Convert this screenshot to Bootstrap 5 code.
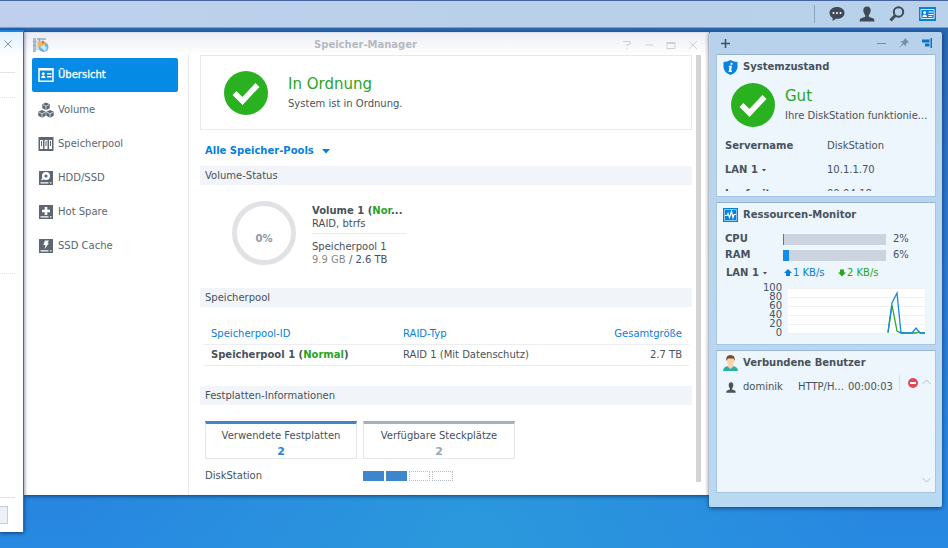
<!DOCTYPE html>
<html lang="de">
<head>
<meta charset="utf-8">
<meta name="viewport" content="width=device-width, initial-scale=1">
<title>Speicher-Manager</title>
<link href="https://cdn.jsdelivr.net/npm/bootstrap@5.3.0/dist/css/bootstrap.min.css" rel="stylesheet">
<style>
  body{font-family:Verdana,"DejaVu Sans",sans-serif;font-size:10px;line-height:18px;color:#48525c;min-height:100vh;
    background:radial-gradient(ellipse at 50% 100%,#2b98dc 0,rgba(43,152,220,0) 60%),linear-gradient(#2a64ac,#2a78cf 45%,#2789e2);}
  button{background:none;border:0;padding:0;color:inherit;line-height:inherit;display:inline-flex;align-items:center}
  svg{display:block;flex:none}
  .taskbar{height:28px;background:linear-gradient(90deg,#bfd0ee,#b8d0ea 60%,#b9d2ea);border-top:1px solid #45659f;border-bottom:1px solid #7ba0cf;padding-right:12px;gap:14px}
  .taskbar .sep{width:1px;height:18px;background:#8ba3bf}
  .desk{padding:4px 6px 16px 0}
  .win{background:#fff;box-shadow:0 1px 4px rgba(0,20,60,.65)}
  .side-win{width:24px;height:calc(100vh - 46px);margin-top:-2px;border-top:2px solid #1685e4;border-right:1px solid #41699b;background:linear-gradient(#dff0fd,#fff 24px);position:relative;z-index:1}
  .side-win hr{margin:0;width:15px;border-top:1px solid #e1e4e8;opacity:1}
  .side-win hr.dots{border-top-style:dotted}
  .stub{width:8px;height:18px;border:1px solid #c5ced8;border-left:0;background:#edf1f7}
  .titlebar{height:23px;background:linear-gradient(#eceef5,#fff);border-top:1px solid #d9dfeb;color:#b5bac2;padding:1px 11px 0 9px}
  .titlebar h1{font-size:10px;font-weight:700;margin:0;line-height:22px}
  .titlebar .ctl{gap:12px;color:#cdd1d6}
  .titlebar .grp{flex:1 1 0}
  .menu{width:165px;padding:3px 10px 0 8px;border-right:1px solid #e6e9ed}
  .menu a{height:34px;margin-bottom:0;padding-left:6px;gap:4px;color:#5b6570;text-decoration:none;border-radius:2px}
  .menu a.active{background:#058ae6;color:#fff;-webkit-text-stroke:0.3px #fff;margin-bottom:1px}
  .content-pane{padding:0 4px 10px 11px;min-width:0}
  .state-box{border:1px solid #e6e9ed;height:75px;padding-left:23px;gap:20px}
  .okay{font-size:15px;line-height:22px;color:#27a51f;margin:0;font-weight:400}
  .pools{color:#057fdb;font-weight:700;margin:12px 0 6px 5px;gap:8px}
  .bar{background:#f1f4f8;font-size:10px;font-weight:400;line-height:19px;margin:0;padding-left:5px}
  .vol{height:103px;padding:16px 0 0 32px;gap:16px}
  .vol-info{width:95px;line-height:13px;padding-top:3px}
  .vol-info .first{border-bottom:1px solid #e6e9ed;padding-bottom:3px;margin-bottom:6px;white-space:nowrap}
  .grn{color:#27a51f}
  .pool-wrap{padding:17px 3px 20px 4px}
  .pool-wrap table{width:100%;line-height:20px}
  .pool-wrap th{color:#057fdb;font-weight:400}
  .pool-wrap th:first-child{width:192px}
  .pool-wrap th,.pool-wrap td{padding:0 7px;border-bottom:1px solid #ebedf0}
  .tiles{padding:16px 5px 0;gap:6px}
  .tile{width:152px;height:38px;border:1px solid #e2e6ea;border-top:3px solid #a7afbd;text-align:center;line-height:16px;padding-top:4px}
  .tile strong{display:block;color:#9aa5b2;font-size:11px}
  .tile.used{border-top-color:#3d86cb}
  .tile.used strong{color:#2b7fcb}
  .slots{padding:8px 5px 0}
  .slots .lbl{width:158px}
  .slots .slot{width:21px;height:10px;margin-right:2px;border:1px dotted #b9bfc6}
  .slots .slot.full{background:#3d86cb;border:0}
  .thumb{width:5px;background:#d3d3d3;margin:0 8px 13px 0}
  .widgets{width:233px;background:linear-gradient(#b9d2eb,#b8d9f2);padding:0 6px 14px 7px;border-radius:2px}
  .whead{height:22px;padding:0 4px 0 5px;color:#3e5063}
  .whead .ctl{gap:13px}
  .wcard{background:#edf5fd;border:1px solid #a9c4e0;border-top-color:#97b6d6;height:143px;margin-bottom:5px;overflow:hidden}
  .wcard:last-child{margin-bottom:0}
  .wcard h2{font-size:10px;line-height:24px;font-weight:700;margin:0;padding-left:6px;gap:5px}
  .health{padding:4px 0 7px 14px;gap:10px}
  .facts{margin:0 0 0 8px;line-height:24px;height:57px;overflow:hidden}
  .facts dt{width:102px}
  .facts dd{margin:0}
  .facts div{height:24px}
  .meter{height:16px;padding-left:8px;gap:7px}
  .meter label{width:51px;font-weight:700}
  .meter .progress{width:103px;height:11px;border-radius:0;background:#cbd3df}
  .meter .progress-bar{background:#158ae8}
  .net{line-height:20px;padding-left:9px}
  .net .pick{width:58px}
  .net .rate{width:54px;gap:1px}
  .blu{color:#057fdb}
  .scale{line-height:9px;width:65px;text-align:right}
  .chart{gap:6px;padding-right:10px}
  .chart svg{margin-top:5px;flex:1 1 0;min-width:0;background:#fff}
  .users{width:173px;margin-left:9px;line-height:24px}
  .users td{padding:0}
  .users .c-icon{width:17px}.users .c-name{width:55px}.users .c-type{width:50px}
  .cut{border-left:1px solid #d7e1ec;height:16px}
  .ulist{height:112px}
</style>
<script src="https://cdn.jsdelivr.net/npm/bootstrap@5.3.0/dist/js/bootstrap.bundle.min.js"></script>
</head>
<body>
<nav class="taskbar d-flex align-items-center justify-content-end" aria-label="Taskleiste">
  <span class="sep"></span>
  <button type="button" aria-label="Nachrichten"><svg width="16" height="16" viewBox="0 0 16 16"><path fill="#3f4a56" d="M8 1C3.700 1 .5 3.500.5 7c0 2.200 1.200 4 3.200 5L3.500 15l3.500-2.200C12 13.200 15.500 10.500 15.500 7c0-3.500-3.200-6-7.500-6z"/><g fill="#fff"><circle cx="4.500" cy="7" r="1"/><circle cx="8" cy="7" r="1"/><circle cx="11.500" cy="7" r="1"/></g></svg></button>
  <button type="button" aria-label="Benutzer"><svg width="16" height="16" viewBox="0 0 16 16"><path fill="#3f4a56" d="M8 .5c-2.300 0-3.700 1.500-3.700 3.800 0 2.100.9 3.800 1.900 4.700v1.800L1 12.800.5 15.500h15L15 12.800l-5.200-2V9c1-.9 1.900-2.600 1.900-4.700C11.700 2 10.300.5 8 .5z"/></svg></button>
  <button type="button" aria-label="Suche"><svg width="16" height="16" viewBox="0 0 16 16" fill="none" stroke="#3f4a56"><circle cx="9.500" cy="6" r="4.700" stroke-width="2"/><path d="M6 9.800 1.500 14.500" stroke-width="3"/></svg></button>
  <button type="button" aria-label="Widgets"><svg width="17" height="14" viewBox="0 0 18 14" preserveAspectRatio="none"><path fill="#057fdb" d="M0 0h18v14H0z"/><path fill="none" stroke="#d8ecfc" d="M2 2.500h14v9H2z"/><circle cx="6" cy="5.500" r="1.500" fill="#fff"/><path fill="#fff" d="M3.500 10q0-2.500 2.500-2.500T8.500 10zM10 4.500h5v1h-5zM10 7h5v1h-5zM10 9h4v1h-4z"/></svg></button>
</nav>

<main class="desk d-flex align-items-start">
  <section class="win side-win d-flex flex-column flex-shrink-0" aria-label="Fenster im Hintergrund">
    <button type="button" class="ps-1 pt-2" aria-label="Schließen"><svg width="8" height="8" viewBox="0 0 8 8"><path d="M.5.5l7 7m0-7l-7 7" stroke="#8793a1" fill="none"/></svg></button>
    <hr class="mt-4 mb-4">
    <hr class="dots">
    <div class="flex-grow-1"></div>
    <hr class="dots">
    <div class="flex-grow-1"></div>
    <div class="pt-5"></div>
    <hr class="mb-2"><div class="stub mb-2"></div>
  </section>

  <section class="win flex-grow-1 d-flex flex-column" aria-label="Speicher-Manager">
    <header class="titlebar d-flex align-items-center">
      <div class="grp"><svg width="16" height="16" viewBox="0 0 16 16"><path fill="#a9bdcb" d="M0 1h3v14H0zM4 1h9v2H4z"/><path fill="#d4dfe8" d="M3 3h8v10H3z"/><path fill="#8fabc1" d="M0 4h3v1H0zM0 8h3v1H0zM6 1h1v4H6z"/><circle cx="10.500" cy="10" r="5" fill="#65b5e6"/><path fill="#f1b758" d="M5 4.500h7v5H5z"/><path fill="#dd685c" d="M9 4h2v2.500H9z"/><path fill="#cbe9fa" d="m7 10 4-2 3 3-2 3z"/></svg></div>
      <h1>Speicher-Manager</h1>
      <div class="grp ctl d-flex justify-content-end">
        <button type="button" aria-label="Hilfe"><svg width="10" height="10" viewBox="0 0 10 10" fill="none" stroke="currentColor"><path d="M1 1.500h7v3H5v2M5 8v1.500"/></svg></button>
        <button type="button" aria-label="Minimieren"><svg width="10" height="10" viewBox="0 0 10 10" stroke="currentColor"><path d="M1 5h8"/></svg></button>
        <button type="button" aria-label="Maximieren"><svg width="10" height="10" viewBox="0 0 10 10" fill="none" stroke="currentColor"><path d="M1 2.500h8v6H1zM1 3.500h8"/></svg></button>
        <button type="button" aria-label="Schließen"><svg width="10" height="10" viewBox="0 0 10 10" fill="none" stroke="currentColor"><path d="m1 1 8 8m0-8L1 9"/></svg></button>
      </div>
    </header>
    <div class="d-flex flex-grow-1">
      <nav class="menu flex-shrink-0" aria-label="Bereiche">
        <a href="#" class="active d-flex align-items-center"><svg width="16" height="16" viewBox="0 0 16 16"><path fill="none" stroke="#fff" stroke-width="1.500" d="M1 1.750h14v12.500H1z"/><path fill="#fff" d="M1 1h14v2.500H1zM3 11q0-2.500 2.250-2.500T7.500 11zM9 6h4.500v1.500H9zM9 9h4.500v1.500H9z"/><circle cx="5.250" cy="6.800" r="1.500" fill="#fff"/></svg>Übersicht</a>
        <a href="#" class="d-flex align-items-center"><svg width="16" height="16" viewBox="0 0 16 16"><g id="cube"><path fill="#5c6773" d="m8 .5 3.700 1.800v4L8 8.200 4.300 6.300v-4z"/><path fill="none" stroke="#fff" stroke-width=".7" d="M5 2.700 8 4.200l3-1.500M8 4.200V8"/></g><use href="#cube" x="-4" y="7.500"/><use href="#cube" x="4" y="7.500"/></svg>Volume</a>
        <a href="#" class="d-flex align-items-center"><svg width="16" height="16" viewBox="0 0 16 16"><path fill="#5c6773" d="M.5 1h15v14H.5z"/><path fill="#fff" d="M2 4h3v9H2zM6.500 4h3v9h-3zM11 4h3v9h-3z"/><path fill="#5c6773" d="M3 5h1v5H3zM7.500 5h1v5h-1zM12 5h1v5h-1z"/></svg>Speicherpool</a>
        <a href="#" class="d-flex align-items-center"><svg width="16" height="16" viewBox="0 0 16 16"><path fill="#5c6773" d="M1 1h14v14H1z"/><circle cx="8" cy="6" r="2.800" fill="none" stroke="#fff" stroke-width="2.400"/><path stroke="#fff" stroke-width="1.500" d="m5.500 8-2 2"/><path fill="#fff" d="M2.500 12.200h8v1.300h-8zM12 12.200h1.500v1.300H12z"/></svg>HDD/SSD</a>
        <a href="#" class="d-flex align-items-center"><svg width="16" height="16" viewBox="0 0 16 16"><path fill="#5c6773" d="M1 1h14v14H1z"/><path fill="#fff" d="M6.700 3h2.600v2.700H12v2.600H9.300V11H6.700V8.300H4V5.700h2.700zM2.500 12.200h8v1.300h-8zM12 12.200h1.500v1.300H12z"/></svg>Hot Spare</a>
        <a href="#" class="d-flex align-items-center"><svg width="16" height="16" viewBox="0 0 16 16"><path fill="#5c6773" d="M1 1h14v14H1z"/><path fill="#fff" d="M7 2.500h4L9.300 5.300H11L6.500 11l1-4H5.300zM2.500 12.200h8v1.300h-8zM12 12.200h1.500v1.300H12z"/></svg>SSD Cache</a>
      </nav>
      <div class="content-pane flex-grow-1">
        <div class="state-box d-flex align-items-center">
          <svg width="44" height="44" viewBox="0 0 44 44"><circle cx="22" cy="22" r="22" fill="#2ab11f"/><path fill="none" stroke="#fff" stroke-width="5.500" d="m10.500 22 8 8 15-16"/></svg>
          <div><h2 class="okay">In Ordnung</h2>System ist in Ordnung.</div>
        </div>
        <button type="button" class="pools">Alle Speicher-Pools <svg width="8" height="5" viewBox="0 0 8 5"><path fill="#057fdb" d="M0 0h8L4 4.500z"/></svg></button>
        <h3 class="bar">Volume-Status</h3>
        <div class="vol d-flex align-items-start">
          <svg width="64" height="64" viewBox="0 0 64 64"><circle cx="32" cy="32" r="29.500" fill="none" stroke="#e0e2e5" stroke-width="5"/><text x="32" y="41" text-anchor="middle" font-weight="700" font-size="10" fill="#8d99a6">0%</text></svg>
          <div class="vol-info">
            <div class="first"><strong>Volume 1 (<span class="grn">Nor</span>...</strong><br>RAID, btrfs</div>
            Speicherpool 1<br><span class="text-black-50">9.9 GB</span> / 2.6 TB
          </div>
        </div>
        <h3 class="bar">Speicherpool</h3>
        <div class="pool-wrap">
          <table>
            <thead><tr><th scope="col">Speicherpool-ID</th><th scope="col">RAID-Typ</th><th scope="col" class="text-end">Gesamtgröße</th></tr></thead>
            <tbody><tr><td><strong>Speicherpool 1 (<span class="grn">Normal</span>)</strong></td><td>RAID 1 (Mit Datenschutz)</td><td class="text-end">2.7 TB</td></tr></tbody>
          </table>
        </div>
        <h3 class="bar">Festplatten-Informationen</h3>
        <div class="tiles d-flex">
          <div class="tile used">Verwendete Festplatten<strong>2</strong></div>
          <div class="tile">Verfügbare Steckplätze<strong>2</strong></div>
        </div>
        <div class="slots d-flex align-items-center"><span class="lbl">DiskStation</span><span class="slot full"></span><span class="slot full"></span><span class="slot"></span><span class="slot"></span></div>
      </div>
      <div class="thumb flex-shrink-0"></div>
    </div>
  </section>

  <aside class="win widgets flex-shrink-0" aria-label="Widgets">
    <div class="whead d-flex align-items-center justify-content-between">
      <button type="button" aria-label="Hinzufügen"><svg width="9" height="9" viewBox="0 0 9 9"><path stroke="#3e5063" stroke-width="1.500" d="M4.500 0v9M0 4.500h9"/></svg></button>
      <div class="ctl d-flex">
        <button type="button" aria-label="Minimieren"><svg width="9" height="10" viewBox="0 0 9 10"><path stroke="#7a8fa6" d="M0 5.500h9"/></svg></button>
        <button type="button" aria-label="Anheften"><svg width="10" height="10" viewBox="0 0 10 10"><path fill="#7a8fa6" d="m6 0 4 4-1.500.5L7 6v2.500L4.700 6.300 0 10l3.700-4.700L1.500 3H4l1.500-1.500z"/></svg></button>
        <button type="button" aria-label="Andocken"><svg width="10" height="10" viewBox="0 0 10 10"><path fill="#0d72c4" d="M0 1.500h7.500v3H0zM3 5.500h4.500v3H3zM8.500 0H10v10H8.500z"/></svg></button>
      </div>
    </div>
    <section class="wcard">
      <h2 class="d-flex align-items-center"><svg width="15" height="15" viewBox="0 0 15 15"><path fill="#0583e0" d="M7.500 0q3 2 7 2v5q0 5-7 8-7-3-7-8V2q4 0 7-2z"/><path fill="#fff" d="M7.500 2.700h2v2h-2zM6 5.700h3L8 10.500h1V12H5.500l1-4.800H5.700z"/></svg>Systemzustand</h2>
      <div class="health d-flex align-items-center">
        <svg width="44" height="44" viewBox="0 0 44 44"><circle cx="22" cy="22" r="22" fill="#2ab11f"/><path fill="none" stroke="#fff" stroke-width="5.500" d="m10.500 22 8 8 15-16"/></svg>
        <div class="text-nowrap"><div class="okay">Gut</div>Ihre DiskStation funktionie...</div>
      </div>
      <dl class="facts">
        <div class="d-flex"><dt>Servername</dt><dd>DiskStation</dd></div>
        <div class="d-flex"><dt><button type="button" class="fw-bold gap-1">LAN 1 <svg width="4" height="3" viewBox="0 0 4 3"><path fill="#414b55" d="M0 0h4L2 2.500z"/></svg></button></dt><dd>10.1.1.70</dd></div>
        <div class="d-flex"><dt>Laufzeit</dt><dd>00:04:18</dd></div>
      </dl>
    </section>
    <section class="wcard">
      <h2 class="d-flex align-items-center"><svg width="15" height="14" viewBox="0 0 15 14"><path fill="#0583e0" d="M0 0h15v14H0z"/><path fill="none" stroke="#8cc8f5" d="M1.500 1.500h12v11h-12z"/><path fill="none" stroke="#fff" stroke-width="1.200" d="M2 7.500h2l1-2 1.500 4 2-6 1.500 6 1-3h2"/></svg>Ressourcen-Monitor</h2>
      <div class="pt-1">
      <div class="meter d-flex align-items-center"><label id="cpu">CPU</label><div class="progress" role="progressbar" aria-labelledby="cpu" aria-valuenow="2" aria-valuemin="0" aria-valuemax="100"><div class="progress-bar" style="width:1%"></div></div>2%</div>
      <div class="meter d-flex align-items-center"><label id="ram">RAM</label><div class="progress" role="progressbar" aria-labelledby="ram" aria-valuenow="6" aria-valuemin="0" aria-valuemax="100"><div class="progress-bar" style="width:6%"></div></div>6%</div>
      <div class="net d-flex align-items-center"><span class="pick"><button type="button" class="fw-bold gap-1">LAN 1 <svg width="4" height="3" viewBox="0 0 4 3"><path fill="#414b55" d="M0 0h4L2 2.500z"/></svg></button></span>
        <span class="rate d-flex align-items-center blu"><svg width="8" height="8" viewBox="0 0 8 8"><path fill="currentColor" d="M4 0l4 4H6v3H2V4H0z"/></svg>1 KB/s</span>
        <span class="rate d-flex align-items-center grn"><svg width="8" height="8" viewBox="0 0 8 8"><path fill="currentColor" d="M4 7.500l4-4H6v-3H2v3H0z"/></svg>2 KB/s</span></div>
      <div class="chart d-flex">
        <div class="scale">100<br>80<br>60<br>40<br>20<br>0</div>
        <svg height="46" viewBox="0 0 137 46" preserveAspectRatio="none"><path stroke="#edf1f4" d="M0 .5h137M0 9.500h137M0 18.500h137M0 27.500h137M0 36.500h137M0 45.500h137"/><path fill="none" stroke="#2ba52a" stroke-width="1.300" d="m100 45 4-28 5 26 4 2h15l3-1 2 1h4"/><path fill="none" stroke="#158ae0" stroke-width="1.300" d="m100 44 4-29 5-10 4 40h11l4-5 4 5h5"/></svg>
      </div>
      </div>
    </section>
    <section class="wcard">
      <h2 class="d-flex align-items-center"><svg width="15" height="16" viewBox="0 0 15 16"><path fill="#27b3a4" d="M0 16q0-4 5-5h5q5 1 5 5z"/><path fill="#f7d3ae" d="M5 8h5v4l-2.500 2L5 12zM4 3h7v4q-1 4-3.500 4T4 7z"/><path fill="#7b4a2e" d="M3.300 6Q2.500 0 7.500 0t4.200 6L10.500 3.500H5z"/></svg>Verbundene Benutzer</h2>
      <div class="d-flex ulist">
        <div><table class="users"><tbody><tr>
          <td class="c-icon"><svg width="10" height="11" viewBox="0 0 16 16" preserveAspectRatio="none"><path fill="#4a545f" d="M8 .5c-2.300 0-3.700 1.500-3.700 3.800 0 2.100.9 3.800 1.900 4.700v1.800L1 12.800.5 15.500h15L15 12.800l-5.200-2V9c1-.9 1.900-2.600 1.900-4.700C11.700 2 10.300.5 8 .5z"/></svg></td>
          <td class="c-name">dominik</td><td class="c-type">HTTP/H...</td><td>00:00:03</td></tr></tbody></table></div>
        <div class="cut d-flex align-items-center ps-2"><button type="button" aria-label="Verbindung trennen"><svg width="10" height="10" viewBox="0 0 10 10"><circle cx="5" cy="5" r="5" fill="#e24a55"/><path fill="#fff" d="M2 4h6v2H2z"/></svg></button></div>
        <div class="d-flex flex-column justify-content-between pt-1 pb-1 ps-1">
          <button type="button" aria-label="Nach oben"><svg width="9" height="6" viewBox="0 0 9 6" fill="none" stroke="#b3bfcd"><path d="m.5 5 4-4 4 4"/></svg></button>
          <button type="button" aria-label="Nach unten"><svg width="9" height="6" viewBox="0 0 9 6" fill="none" stroke="#b3bfcd"><path d="m.5 1 4 4 4-4"/></svg></button>
        </div>
      </div>
    </section>
  </aside>
</main>
</body>
</html>
